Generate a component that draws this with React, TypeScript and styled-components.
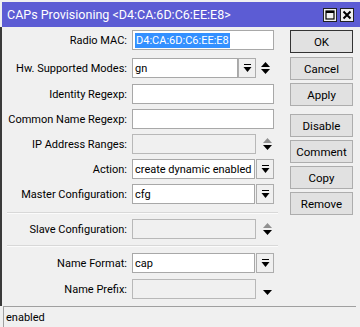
import React from "react";
import styled, { createGlobalStyle } from "styled-components";

const Global = createGlobalStyle`
  html, body { margin: 0; padding: 0; background: #f0f0f0; }
  body { font-family: Roboto, "Liberation Sans", Arial, sans-serif; font-size: 11px; color: #000; }
`;

const Window = styled.div`
  width: 360px;
  height: 327px;
  overflow: hidden;
  background: #f0f0f0;
  display: flex;
  flex-direction: column;
  padding-top: 2px;
  box-sizing: border-box;
`;

const TitleBar = styled.div`
  height: 25px;
  margin-left: 2px;
  background: #5c5cd4;
  display: flex;
  align-items: center;
  padding: 0 6px 0 5px;
  flex-shrink: 0;
`;

const TitleText = styled.div`
  flex: 1;
  color: #fff;
  font-size: 12.5px;
  white-space: nowrap;
`;

const TitleButton = styled.div`
  width: 12px;
  height: 12px;
  margin-left: 3px;
  background: #f0f0f0;
  border: 1px solid #222;
  display: flex;
  align-items: center;
  justify-content: center;
`;

const Body = styled.div`
  flex: 1;
  display: flex;
  border-left: 2px solid #3a3a3a;
  min-height: 0;
`;

const Form = styled.div`
  width: 286px;
  display: flex;
  flex-direction: column;
  padding-top: 3px;
`;

const Row = styled.div<{ $mt: number }>`
  display: flex;
  align-items: center;
  height: 20px;
  margin-top: ${(p) => p.$mt}px;
`;

const Label = styled.div`
  width: 125px;
  text-align: right;
  padding-right: 5px;
  white-space: nowrap;
`;

const Field = styled.div<{ $w: number; $disabled?: boolean }>`
  width: ${(p) => p.$w}px;
  height: 20px;
  box-sizing: border-box;
  border: 1px solid ${(p) => (p.$disabled ? "#b8b8b8" : "#a8a8a8")};
  background: ${(p) => (p.$disabled ? "#f0f0f0" : "#fff")};
  display: flex;
  align-items: center;
  padding-left: 2px;
  white-space: nowrap;
  overflow: hidden;
`;

const Selected = styled.span`
  background: #3390ff;
  color: #fff;
  padding: 0 1px;
  line-height: 15px;
`;

const DropButton = styled.div<{ $ml: number }>`
  width: 18px;
  height: 20px;
  box-sizing: border-box;
  margin-left: ${(p) => p.$ml}px;
  border: 1px solid #adadad;
  background: #f0f0f0;
  display: flex;
  align-items: center;
  justify-content: center;
`;

const Arrows = styled.div<{ $ml: number }>`
  margin-left: ${(p) => p.$ml}px;
  width: 11px;
  display: flex;
  align-items: center;
  justify-content: center;
`;

const Separator = styled.div<{ $mt: number }>`
  margin: ${(p) => p.$mt}px 10px 0 5px;
  border-top: 1px solid #d8d8d8;
  border-bottom: 1px solid #fbfbfb;
`;

const Buttons = styled.div`
  display: flex;
  flex-direction: column;
  padding-top: 3px;
  padding-left: 2px;
`;

const Btn = styled.div<{ $mt: number; $default?: boolean }>`
  width: 63px;
  height: 23px;
  box-sizing: border-box;
  margin-top: ${(p) => p.$mt}px;
  border: 1px solid ${(p) => (p.$default ? "#333" : "#adadad")};
  background: #e1e1e1;
  display: flex;
  align-items: center;
  justify-content: center;
  font-size: 11.5px;
`;

const StatusBar = styled.div`
  height: 20px;
  margin-left: 3px;
  margin-right: 4px;
  border-top: 1px solid #a0a0a0;
  border-left: 1px solid #a0a0a0;
  display: flex;
  align-items: center;
  padding-left: 2px;
  flex-shrink: 0;
`;

const DropIcon = () => (
  <svg width="9" height="9" viewBox="0 0 9 9">
    <rect x="1" y="0" width="7" height="1" fill="#000" />
    <polygon points="0.5,3 8.5,3 4.5,8" fill="#000" />
  </svg>
);

const UpDown = ({ upGray, noUp }: { upGray?: boolean; noUp?: boolean }) => (
  <svg width="11" height="14" viewBox="0 0 11 14">
    {!noUp && <polygon points="5.5,1 10,6 1,6" fill={upGray ? "#909090" : "#000"} />}
    <polygon points="1,8 10,8 5.5,13" fill="#000" />
  </svg>
);

export default function App() {
  return (
    <>
      <Global />
      <Window>
        <TitleBar>
          <TitleText>CAPs Provisioning &lt;D4:CA:6D:C6:EE:E8&gt;</TitleText>
          <TitleButton>
            <svg width="10" height="10" viewBox="0 0 10 10">
              <rect x="1" y="1" width="8" height="8" fill="none" stroke="#000" strokeWidth="1.2" />
              <rect x="1" y="1" width="8" height="2" fill="#000" />
            </svg>
          </TitleButton>
          <TitleButton>
            <svg width="10" height="10" viewBox="0 0 10 10">
              <path d="M1.5 1.5 L8.5 8.5 M8.5 1.5 L1.5 8.5" stroke="#000" strokeWidth="2" />
            </svg>
          </TitleButton>
        </TitleBar>
        <Body>
          <Form>
            <Row $mt={0}>
              <Label>Radio MAC:</Label>
              <Field $w={142}>
                <Selected>D4:CA:6D:C6:EE:E8</Selected>
              </Field>
            </Row>
            <Row $mt={8}>
              <Label>Hw. Supported Modes:</Label>
              <Field $w={106}>gn</Field>
              <DropButton $ml={0}>
                <DropIcon />
              </DropButton>
              <Arrows $ml={4}>
                <UpDown />
              </Arrows>
            </Row>
            <Row $mt={6}>
              <Label>Identity Regexp:</Label>
              <Field $w={142} />
            </Row>
            <Row $mt={5}>
              <Label>Common Name Regexp:</Label>
              <Field $w={142} />
            </Row>
            <Row $mt={5}>
              <Label>IP Address Ranges:</Label>
              <Field $w={124} $disabled />
              <Arrows $ml={6}>
                <UpDown upGray />
              </Arrows>
            </Row>
            <Row $mt={5}>
              <Label>Action:</Label>
              <Field $w={123}>create dynamic enabled</Field>
              <DropButton $ml={1}>
                <DropIcon />
              </DropButton>
            </Row>
            <Row $mt={5}>
              <Label>Master Configuration:</Label>
              <Field $w={123}>cfg</Field>
              <DropButton $ml={1}>
                <DropIcon />
              </DropButton>
            </Row>
            <Separator $mt={8} />
            <Row $mt={5}>
              <Label>Slave Configuration:</Label>
              <Field $w={124} $disabled />
              <Arrows $ml={6}>
                <UpDown upGray />
              </Arrows>
            </Row>
            <Separator $mt={6} />
            <Row $mt={6}>
              <Label>Name Format:</Label>
              <Field $w={123}>cap</Field>
              <DropButton $ml={1}>
                <DropIcon />
              </DropButton>
            </Row>
            <Row $mt={6}>
              <Label>Name Prefix:</Label>
              <Field $w={124} $disabled />
              <Arrows $ml={6}>
                <UpDown noUp />
              </Arrows>
            </Row>
          </Form>
          <Buttons>
            <Btn $mt={0} $default>OK</Btn>
            <Btn $mt={4}>Cancel</Btn>
            <Btn $mt={3}>Apply</Btn>
            <Btn $mt={8}>Disable</Btn>
            <Btn $mt={3}>Comment</Btn>
            <Btn $mt={3}>Copy</Btn>
            <Btn $mt={3}>Remove</Btn>
          </Buttons>
        </Body>
        <StatusBar>enabled</StatusBar>
      </Window>
    </>
  );
}
